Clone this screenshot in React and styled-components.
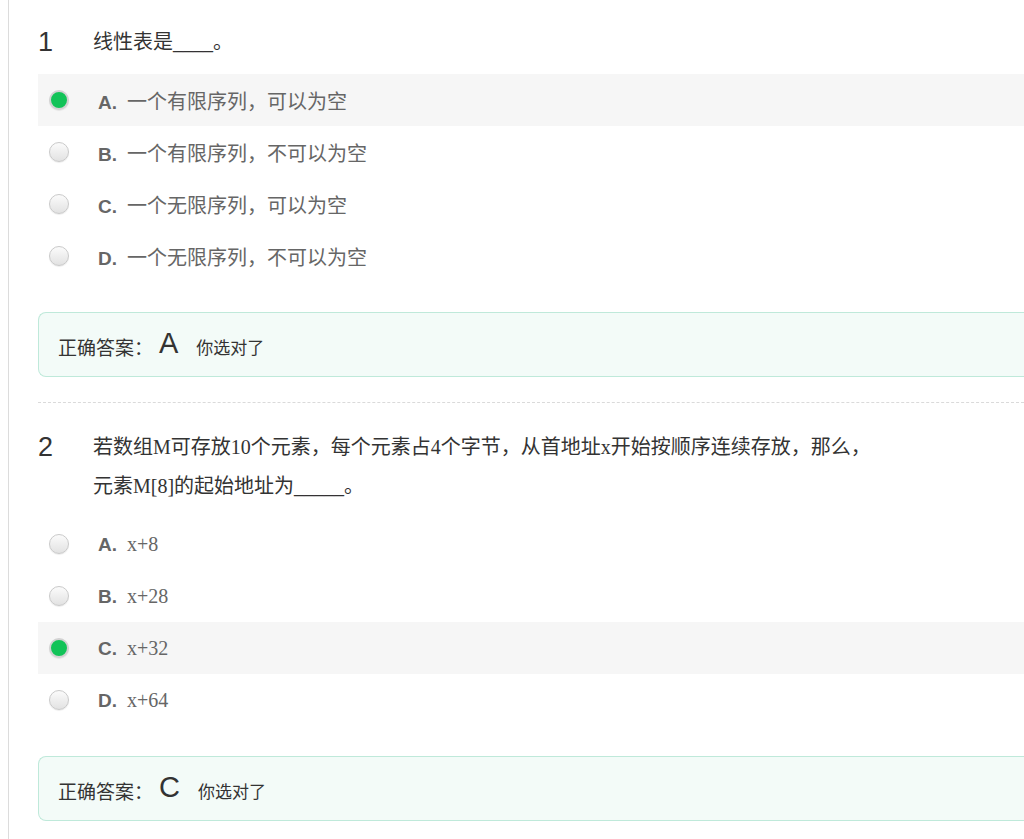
import React from "react";
import styled, { createGlobalStyle } from "styled-components";

const GlobalStyle = createGlobalStyle`
  html, body {
    margin: 0;
    padding: 0;
    overflow: hidden;
    background: #fff;
  }
`;

const questions = [
  {
    no: 1,
    title: "线性表是____。",
    options: [
      { key: "A", text: "一个有限序列，可以为空" },
      { key: "B", text: "一个有限序列，不可以为空" },
      { key: "C", text: "一个无限序列，可以为空" },
      { key: "D", text: "一个无限序列，不可以为空" },
    ],
    picked: "A",
    answer: "A",
  },
  {
    no: 2,
    title:
      "若数组M可存放10个元素，每个元素占4个字节，从首地址x开始按顺序连续存放，那么，元素M[8]的起始地址为_____。",
    options: [
      { key: "A", text: "x+8" },
      { key: "B", text: "x+28" },
      { key: "C", text: "x+32" },
      { key: "D", text: "x+64" },
    ],
    picked: "C",
    answer: "C",
  },
];

function App() {
  return (
    <Page>
      <GlobalStyle />
      {questions.map((q) => (
        <Question key={q.no}>
          <Header>
            <Num>{q.no}</Num>
            <Title>{q.title}</Title>
          </Header>
          <Options>
            {q.options.map((o) => (
              <Option key={o.key} active={o.key === q.picked}>
                <Radio checked={o.key === q.picked} />
                <OptBody>
                  <Label>{o.key}.</Label>
                  <OptText>{o.text}</OptText>
                </OptBody>
              </Option>
            ))}
          </Options>
          <AnswerBox>
            <AnswerTitle>正确答案：</AnswerTitle>
            <AnswerKey>{q.answer}</AnswerKey>
            <Verdict>{q.picked === q.answer ? "你选对了" : "你选错了"}</Verdict>
          </AnswerBox>
        </Question>
      ))}
    </Page>
  );
}

const Page = styled.div`
  margin-left: 8px;
  min-height: 839px;
  border-left: 1px solid #dcdcdc;
  padding-left: 29px;
  box-sizing: border-box;
`;

const Question = styled.div`
  padding: 25px 0 25px;
  border-bottom: 1px dashed #dadada;
  &:first-child {
    padding-top: 23px;
  }
`;

const Header = styled.div`
  display: flex;
  align-items: flex-start;
`;

const Num = styled.div`
  width: 55px;
  flex-shrink: 0;
  font-family: "Liberation Sans", Arial, sans-serif;
  font-size: 27px;
  line-height: 39px;
  color: #333;
`;

const Title = styled.div`
  max-width: 790px;
  font-family: "Liberation Serif", "Noto Sans CJK SC", serif;
  font-size: 20px;
  line-height: 39px;
  color: #333;
`;

const Options = styled.div`
  margin-top: 12px;
  display: flex;
  flex-direction: column;
`;

const Option = styled.div`
  display: flex;
  align-items: center;
  height: 52px;
  padding-left: 11px;
  background: ${(p) => (p.active ? "#f6f6f6" : "transparent")};
`;

const Radio = styled.span`
  width: 20px;
  height: 20px;
  border-radius: 50%;
  box-sizing: border-box;
  flex-shrink: 0;
  border: ${(p) => (p.checked ? "2px solid #d2d2d2" : "1px solid #cacaca")};
  background: ${(p) =>
    p.checked ? "#12c358" : "linear-gradient(180deg, #fbfbfb 0%, #e2e2e2 100%)"};
  box-shadow: 0 1px 1px rgba(0, 0, 0, 0.08);
`;

const OptBody = styled.div`
  display: flex;
  align-items: baseline;
  margin-left: 29px;
`;

const Label = styled.span`
  width: 29px;
  font-family: "Liberation Sans", Arial, sans-serif;
  font-weight: bold;
  font-size: 19px;
  color: #666;
`;

const OptText = styled.span`
  font-family: "Liberation Serif", "Noto Sans CJK SC", serif;
  font-size: 20px;
  color: #666;
`;

const AnswerBox = styled.div`
  margin-top: 30px;
  height: 65px;
  box-sizing: border-box;
  display: flex;
  align-items: center;
  padding-left: 19px;
  padding-top: 4px;
  border: 1px solid #bfe9da;
  border-right: none;
  border-radius: 8px 0 0 8px;
  background: #f3fbf8;
  color: #333;
`;

const AnswerTitle = styled.span`
  font-family: "Noto Sans CJK SC", sans-serif;
  font-size: 19px;
`;

const AnswerKey = styled.span`
  margin-left: 6px;
  font-family: "Liberation Sans", Arial, sans-serif;
  font-size: 29px;
  line-height: 1;
  position: relative;
  top: -3px;
`;

const Verdict = styled.span`
  margin-left: 18px;
  font-family: "Noto Sans CJK SC", sans-serif;
  font-size: 17px;
`;

export default App;
